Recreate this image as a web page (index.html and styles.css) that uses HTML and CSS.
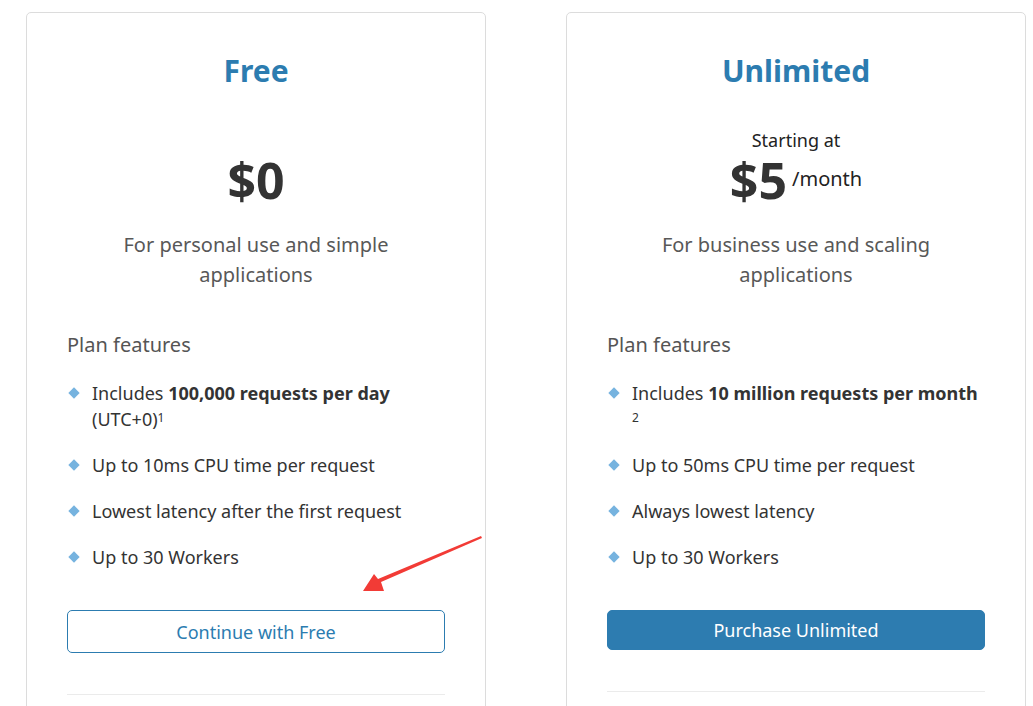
FILE: index.html
```html
<!DOCTYPE html>
<html lang="en">
<head>
<meta charset="utf-8">
<title>Plans</title>
<link rel="stylesheet" href="styles.css">
</head>
<body>
<div class="plans">
  <section class="card">
    <h2 class="title">Free</h2>
    <p class="starting hidden">Starting at</p>
    <div class="price"><span class="amount">$0</span></div>
    <p class="desc">For personal use and simple applications</p>
    <h3 class="features-head">Plan features</h3>
    <ul class="features">
      <li>Includes <b>100,000 requests per day</b> (UTC+0)<sup>1</sup></li>
      <li>Up to 10ms CPU time per request</li>
      <li>Lowest latency after the first request</li>
      <li>Up to 30 Workers</li>
    </ul>
    <button class="btn btn-outline">Continue with Free</button>
    <hr class="rule">
  </section>
  <section class="card">
    <h2 class="title">Unlimited</h2>
    <p class="starting">Starting at</p>
    <div class="price"><span class="amount">$5</span><span class="per">/month</span></div>
    <p class="desc">For business use and scaling applications</p>
    <h3 class="features-head">Plan features</h3>
    <ul class="features">
      <li>Includes <b>10 million requests per month</b><br><sup>2</sup></li>
      <li>Up to 50ms CPU time per request</li>
      <li>Always lowest latency</li>
      <li>Up to 30 Workers</li>
    </ul>
    <button class="btn btn-solid">Purchase Unlimited</button>
    <hr class="rule rule-solid">
  </section>
</div>
<svg class="arrow" width="1033" height="706" viewBox="0 0 1033 706" aria-hidden="true">
  <polygon points="481,536 482,538 381,582 384,591 363,591 374,574 378,579" fill="#f23b36"/>
</svg>
</body>
</html>
```

FILE: styles.css
```css
html, body {
  margin: 0;
  padding: 0;
  background: #fff;
}
body {
  font-family: "Noto Sans", "Open Sans", sans-serif;
  color: #333;
  overflow: hidden;
  height: 706px;
}
.plans {
  display: grid;
  grid-template-columns: 460px 460px;
  column-gap: 80px;
  padding: 12px 0 0 26px;
}
.card {
  border: 1px solid #dcdcdc;
  border-radius: 5px;
  padding: 38px 40px 0;
  height: 900px;
  display: flex;
  flex-direction: column;
  text-align: center;
}
.title {
  margin: 0;
  font-size: 30px;
  line-height: 40px;
  font-weight: 700;
  color: #2c7cb0;
}
.starting {
  margin: 37px 0 0;
  font-size: 18px;
  line-height: 24px;
  color: #222;
}
.hidden { visibility: hidden; }
.price {
  display: flex;
  justify-content: center;
  align-items: center;
  gap: 5px;
  height: 56px;
}
.amount {
  font-size: 50px;
  font-weight: 700;
  line-height: 56px;
  color: #333;
}
.per {
  font-size: 20px;
  line-height: 24px;
  color: #222;
  margin-top: -2px;
}
.desc {
  margin: 22px 0 0;
  font-size: 20px;
  line-height: 30px;
  color: #585858;
  padding: 0 10px;
}
.features-head {
  margin: 41px 0 0;
  font-size: 20px;
  line-height: 28px;
  font-weight: 400;
  color: #555;
  text-align: left;
}
.features {
  list-style: none;
  margin: 21px 0 0;
  padding: 0;
  text-align: left;
  display: flex;
  flex-direction: column;
  gap: 20px;
}
.features li {
  position: relative;
  padding-left: 25px;
  font-size: 18px;
  line-height: 26px;
  color: #333;
}
.features li::before {
  content: "";
  position: absolute;
  left: 3px;
  top: 9px;
  width: 8px;
  height: 8px;
  background: #76b3df;
  transform: rotate(45deg);
}
.features b { font-weight: 700; color: #333; }
.features sup {
  font-size: 12px;
  line-height: 0;
  vertical-align: 4px;
}
.btn {
  margin-top: 40px;
  font-family: inherit;
  font-size: 18px;
  border-radius: 5px;
  cursor: pointer;
  width: 100%;
}
.btn-outline {
  height: 43px;
  background: #fff;
  color: #2c7cb0;
  border: 1px solid #2c7cb0;
}
.btn-solid {
  height: 40px;
  background: #2d7cb0;
  color: #fff;
  border: 1px solid #2d7cb0;
}
.rule {
  margin: 41px 0 0;
  border: 0;
  border-top: 1px solid #ebebeb;
  height: 0;
}
.arrow {
  position: absolute;
  left: 0;
  top: 0;
  pointer-events: none;
}
```
